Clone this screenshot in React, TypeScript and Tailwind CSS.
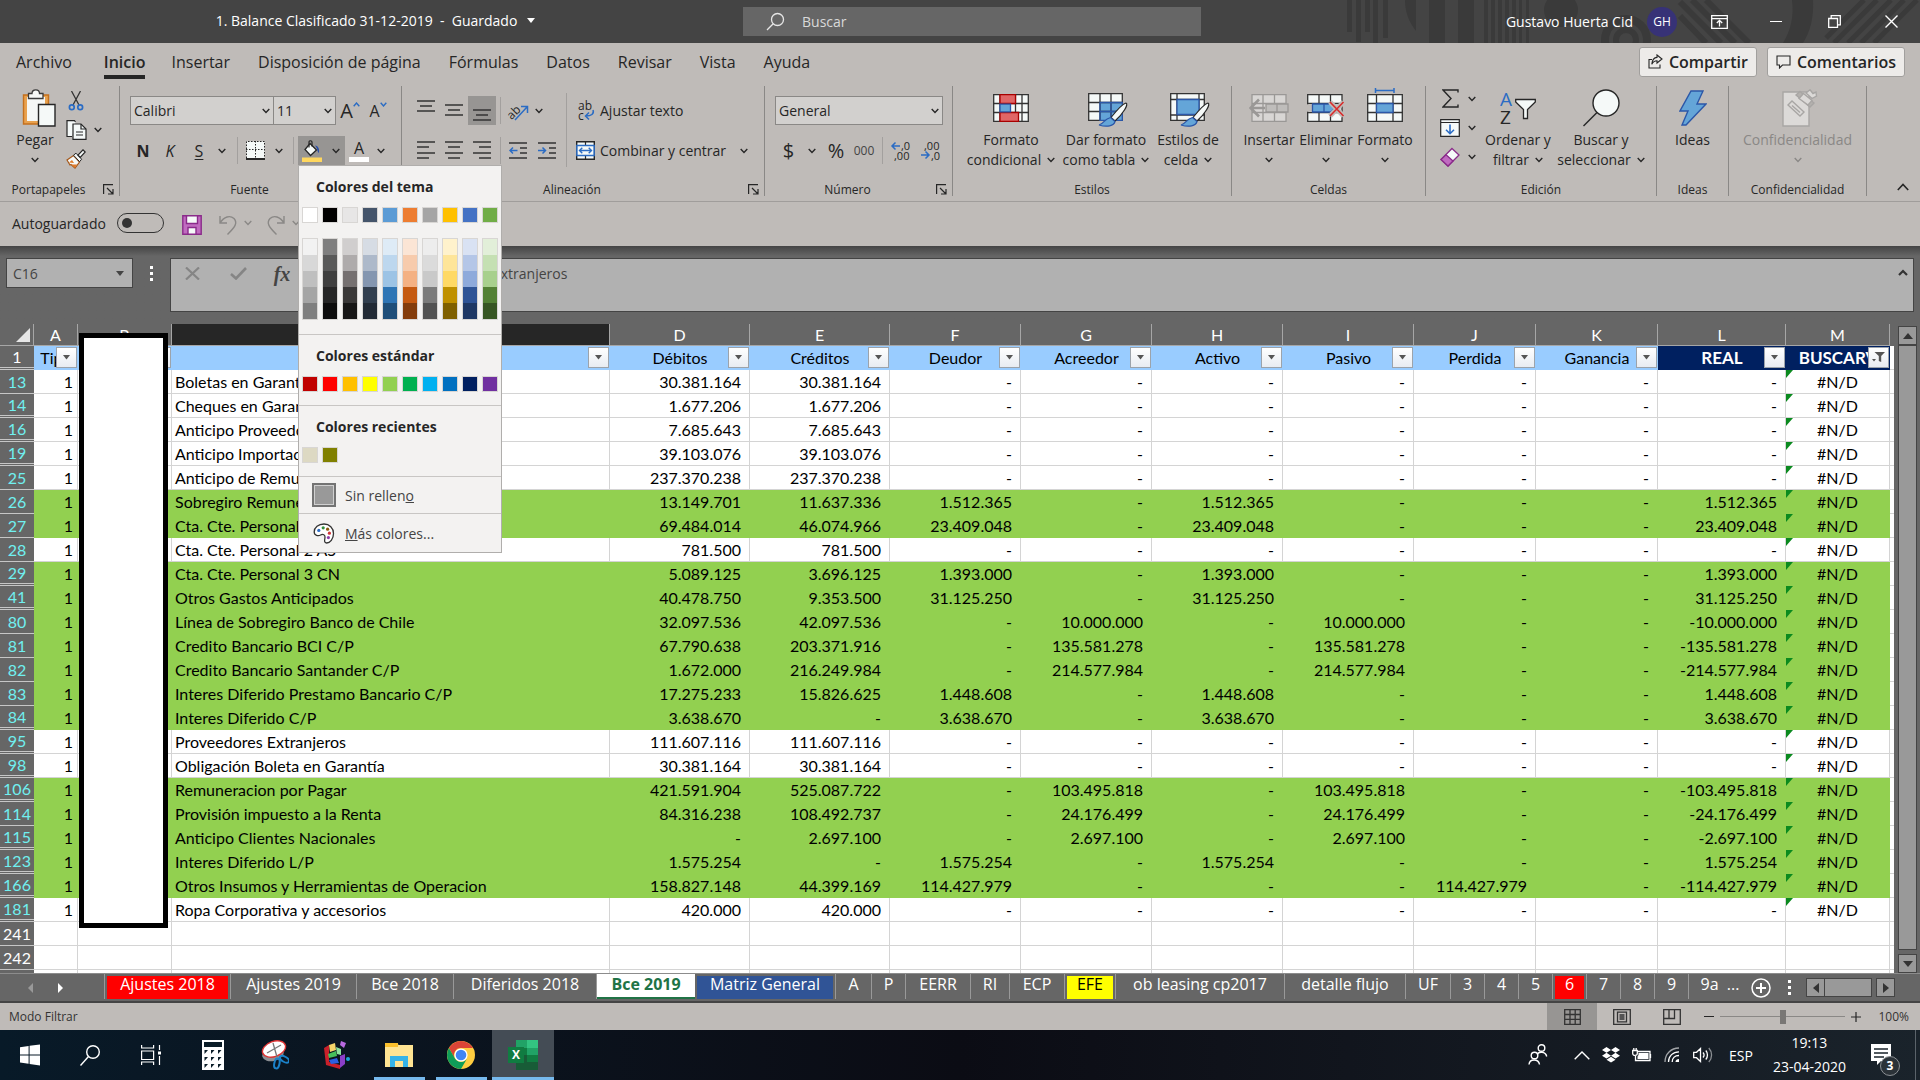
import React, { useState } from 'react';

type Children = { children?: React.ReactNode };

type Row = { n: number; name: string; green?: boolean; cells: string[] };

const dash = '-';

// Débitos, Créditos, Deudor, Acreedor, Activo, Pasivo, Perdida, Ganancia, REAL
const rows: Row[] = [
  { n: 13, name: 'Boletas en Garantía', cells: ['30.381.164', '30.381.164', dash, dash, dash, dash, dash, dash, dash] },
  { n: 14, name: 'Cheques en Garantía', cells: ['1.677.206', '1.677.206', dash, dash, dash, dash, dash, dash, dash] },
  { n: 16, name: 'Anticipo Proveedores Extranjeros', cells: ['7.685.643', '7.685.643', dash, dash, dash, dash, dash, dash, dash] },
  { n: 19, name: 'Anticipo Importaciones', cells: ['39.103.076', '39.103.076', dash, dash, dash, dash, dash, dash, dash] },
  { n: 25, name: 'Anticipo de Remuneraciones', cells: ['237.370.238', '237.370.238', dash, dash, dash, dash, dash, dash, dash] },
  { n: 26, name: 'Sobregiro Remuneraciones', green: true, cells: ['13.149.701', '11.637.336', '1.512.365', dash, '1.512.365', dash, dash, dash, '1.512.365'] },
  { n: 27, name: 'Cta. Cte. Personal', green: true, cells: ['69.484.014', '46.074.966', '23.409.048', dash, '23.409.048', dash, dash, dash, '23.409.048'] },
  { n: 28, name: 'Cta. Cte. Personal 2 AS', cells: ['781.500', '781.500', dash, dash, dash, dash, dash, dash, dash] },
  { n: 29, name: 'Cta. Cte. Personal 3 CN', green: true, cells: ['5.089.125', '3.696.125', '1.393.000', dash, '1.393.000', dash, dash, dash, '1.393.000'] },
  { n: 41, name: 'Otros Gastos Anticipados', green: true, cells: ['40.478.750', '9.353.500', '31.125.250', dash, '31.125.250', dash, dash, dash, '31.125.250'] },
  { n: 80, name: 'Línea de Sobregiro Banco de Chile', green: true, cells: ['32.097.536', '42.097.536', dash, '10.000.000', dash, '10.000.000', dash, dash, '-10.000.000'] },
  { n: 81, name: 'Credito Bancario BCI C/P', green: true, cells: ['67.790.638', '203.371.916', dash, '135.581.278', dash, '135.581.278', dash, dash, '-135.581.278'] },
  { n: 82, name: 'Credito Bancario Santander C/P', green: true, cells: ['1.672.000', '216.249.984', dash, '214.577.984', dash, '214.577.984', dash, dash, '-214.577.984'] },
  { n: 83, name: 'Interes Diferido Prestamo Bancario C/P', green: true, cells: ['17.275.233', '15.826.625', '1.448.608', dash, '1.448.608', dash, dash, dash, '1.448.608'] },
  { n: 84, name: 'Interes Diferido C/P', green: true, cells: ['3.638.670', dash, '3.638.670', dash, '3.638.670', dash, dash, dash, '3.638.670'] },
  { n: 95, name: 'Proveedores Extranjeros', cells: ['111.607.116', '111.607.116', dash, dash, dash, dash, dash, dash, dash] },
  { n: 98, name: 'Obligación Boleta en Garantía', cells: ['30.381.164', '30.381.164', dash, dash, dash, dash, dash, dash, dash] },
  { n: 106, name: 'Remuneracion por Pagar', green: true, cells: ['421.591.904', '525.087.722', dash, '103.495.818', dash, '103.495.818', dash, dash, '-103.495.818'] },
  { n: 114, name: 'Provisión impuesto a la Renta', green: true, cells: ['84.316.238', '108.492.737', dash, '24.176.499', dash, '24.176.499', dash, dash, '-24.176.499'] },
  { n: 115, name: 'Anticipo Clientes Nacionales', green: true, cells: [dash, '2.697.100', dash, '2.697.100', dash, '2.697.100', dash, dash, '-2.697.100'] },
  { n: 123, name: 'Interes Diferido L/P', green: true, cells: ['1.575.254', dash, '1.575.254', dash, '1.575.254', dash, dash, dash, '1.575.254'] },
  { n: 166, name: 'Otros Insumos y Herramientas de Operacion', green: true, cells: ['158.827.148', '44.399.169', '114.427.979', dash, dash, dash, '114.427.979', dash, '-114.427.979'] },
  { n: 181, name: 'Ropa Corporativa y accesorios', cells: ['420.000', '420.000', dash, dash, dash, dash, dash, dash, dash] },
];

const columns = [
  { letter: 'A', title: 'Tipo', width: 'w-[44px]' },
  { letter: 'B', title: '', width: 'w-[94px]' },
  { letter: 'C', title: '', width: '' },
  { letter: 'D', title: 'Débitos', width: 'w-[140px]' },
  { letter: 'E', title: 'Créditos', width: 'w-[140px]' },
  { letter: 'F', title: 'Deudor', width: 'w-[131px]' },
  { letter: 'G', title: 'Acreedor', width: 'w-[131px]' },
  { letter: 'H', title: 'Activo', width: 'w-[131px]' },
  { letter: 'I', title: 'Pasivo', width: 'w-[131px]' },
  { letter: 'J', title: 'Perdida', width: 'w-[122px]' },
  { letter: 'K', title: 'Ganancia', width: 'w-[122px]' },
  { letter: 'L', title: 'REAL', width: 'w-[128px]', navy: true },
  { letter: 'M', title: 'BUSCARV', width: 'w-[104px]', navy: true },
];

const themeColors = [
  ['#ffffff', '#f2f2f2', '#d8d8d8', '#bfbfbf', '#a5a5a5', '#7f7f7f'],
  ['#000000', '#7f7f7f', '#595959', '#3f3f3f', '#262626', '#0c0c0c'],
  ['#e7e6e6', '#d0cece', '#aeabab', '#757070', '#3a3838', '#171616'],
  ['#44546a', '#d6dce4', '#adb9ca', '#8496b0', '#323f4f', '#222a35'],
  ['#5b9bd5', '#deebf6', '#bdd7ee', '#9cc3e5', '#2e75b5', '#1e4e79'],
  ['#ed7d31', '#fbe5d5', '#f7cbac', '#f4b183', '#c55a11', '#833c0b'],
  ['#a5a5a5', '#ededed', '#dbdbdb', '#c9c9c9', '#7b7b7b', '#525252'],
  ['#ffc000', '#fff2cc', '#fee599', '#ffd965', '#bf9000', '#7f6000'],
  ['#4472c4', '#d9e2f3', '#b4c6e7', '#8eaadb', '#2f5496', '#1f3864'],
  ['#70ad47', '#e2efd9', '#c5e0b3', '#a8d08d', '#538135', '#375623'],
];

const standardColors = ['#c00000', '#ff0000', '#ffc000', '#ffff00', '#92d050', '#00b050', '#00b0f0', '#0070c0', '#002060', '#7030a0'];
const recentColors = ['#ddd9c3', '#808000'];

const sheets = [
  { name: 'Ajustes 2018', width: 'w-[126px]', fill: 'bg-[#ff0000] text-white' },
  { name: 'Ajustes 2019', width: 'w-[126px]' },
  { name: 'Bce 2018', width: 'w-[97px]' },
  { name: 'Diferidos 2018', width: 'w-[143px]' },
  { name: 'Bce 2019', width: 'w-[98px]', active: true },
  { name: 'Matriz General', width: 'w-[141px]', fill: 'bg-[#305496] text-white' },
  { name: 'A', width: 'w-[36px]' },
  { name: 'P', width: 'w-[34px]' },
  { name: 'EERR', width: 'w-[65px]' },
  { name: 'RI', width: 'w-[39px]' },
  { name: 'ECP', width: 'w-[55px]' },
  { name: 'EFE', width: 'w-[51px]', fill: 'bg-[#ffff00] text-black' },
  { name: 'ob leasing cp2017', width: 'w-[169px]' },
  { name: 'detalle flujo', width: 'w-[121px]' },
  { name: 'UF', width: 'w-[45px]' },
  { name: '3', width: 'w-[34px]' },
  { name: '4', width: 'w-[34px]' },
  { name: '5', width: 'w-[34px]' },
  { name: '6', width: 'w-[34px]', fill: 'bg-[#ff0000] text-white' },
  { name: '7', width: 'w-[34px]' },
  { name: '8', width: 'w-[34px]' },
  { name: '9', width: 'w-[34px]' },
];

/* ---------- small shared pieces ---------- */

const Chevron: React.FC<{ className?: string }> = ({ className = '' }) => (
  <svg width="8" height="6" viewBox="0 0 8 6" className={`shrink-0 ${className}`} fill="none" stroke="currentColor" strokeWidth="1.4">
    <path d="M0.7 1 L4 4.4 L7.3 1" />
  </svg>
);

const IconButton: React.FC<Children & { label: string; className?: string }> = ({ label, className = '', children }) => (
  <button aria-label={label} title={label} className={`flex h-[29px] shrink-0 items-center justify-center ${className}`}>
    {children}
  </button>
);

const Separator: React.FC<{ className?: string }> = ({ className = '' }) => (
  <div className={`h-[27px] w-px shrink-0 bg-[#a3a09e] ${className}`} />
);

const Group: React.FC<Children & { label: string; className: string; launcher?: boolean }> = ({ label, className, launcher, children }) => (
  <section aria-label={label} className={`flex shrink-0 flex-col border-r border-[#8a8886] ${className}`}>
    <div className="flex h-[97px]">{children}</div>
    <div className="flex h-[13px] items-center">
      <span className="flex-1 text-center text-[12px] leading-[13px]">{label}</span>
      {launcher && (
        <button aria-label={`Opciones de ${label}`} className="flex w-[22px] justify-center">
          <svg width="11" height="11" viewBox="0 0 11 11" fill="none" stroke="#262626" strokeWidth="1.2">
            <path d="M0.6 10 V0.6 H10 M4 4 L9.5 9.5 M10 5 V10 H5" />
          </svg>
        </button>
      )}
    </div>
  </section>
);

const BigButton: React.FC<{ icon: React.ReactNode; lines: string[]; className: string; chevron?: 'inline' | 'below' }> = ({ icon, lines, className, chevron }) => (
  <button className={`flex shrink-0 flex-col items-center text-[14px] leading-5 ${className}`}>
    <span className="flex h-[44px] items-center justify-center">{icon}</span>
    <span className="whitespace-nowrap">{lines[0]}</span>
    {chevron === 'inline' && (
      <span className="flex items-center gap-[6px] whitespace-nowrap">
        {lines[1]}
        <Chevron />
      </span>
    )}
    {chevron === 'below' && <Chevron className="mt-[7px]" />}
  </button>
);

/* ---------- title bar ---------- */

const TitlePattern: React.FC = () => (
  <svg className="absolute right-0 top-0" width="580" height="43" viewBox="0 0 580 43" fill="#3a3a3a" aria-hidden="true">
    <path d="M7 0h5v32h-5z M16 0h5v42h-5z M25 0h5v32h-5z M33 0h5v43h-5z M43 0h5v38h-5z" />
    <path d="M65 0 H76 V31 C69 22 65 12 65 0Z M89 0h16v43h-16z M118 0h16v43h-16z" />
    <path d="M144 0h4v43h-4z M151 0h4v43h-4z M158 0h4v43h-4z M165 0h4v43h-4z M172 0h4v43h-4z M179 0h3v43h-3z M186 0h3v43h-3z" />
    <circle cx="221" cy="10" r="17" />
    <g fill="none" stroke="#3a3a3a">
      <circle cx="286" cy="40" r="21" strokeWidth="8" />
      <circle cx="286" cy="40" r="10" strokeWidth="6" />
      <path strokeWidth="6" d="M340 16 L366 43 M340 2 L381 43 M352 0 L395 43 M366 0 L409 43" />
      <path strokeWidth="5" d="M486 38 L524 0 M494 43 L537 0 M508 43 L551 0 M521 43 L564 0 M534 43 L577 0" />
    </g>
    <path d="M452 0 H473 C474 18 470 32 463 43 H443 C451 30 454 16 452 0Z" />
  </svg>
);

const TitleBar: React.FC = () => (
  <header className="relative grid h-[43px] shrink-0 grid-cols-[743fr_458fr_719fr] items-center bg-[#444444] text-[14px] text-white">
    <TitlePattern />
    <div className="flex items-center justify-center gap-[10px] pb-[2px] pl-2">
      <h1 className="whitespace-pre">1. Balance Clasificado 31-12-2019  -  Guardado</h1>
      <svg width="8" height="5" viewBox="0 0 8 5" fill="white"><path d="M0 0H8L4 5Z" /></svg>
    </div>
    <label className="flex h-[29px] items-center bg-[#666666] pl-[23px]">
      <svg width="19" height="19" viewBox="0 0 19 19" fill="none" stroke="#e6e6e6" strokeWidth="1.3">
        <circle cx="11.5" cy="7.5" r="6" />
        <path d="M7.2 11.8 L1 18" />
      </svg>
      <input type="text" aria-label="Buscar" placeholder="Buscar" className="ml-[17px] flex-1 bg-transparent outline-none placeholder:text-[#d9d9d9]" />
    </label>
    <div className="relative flex items-center justify-end">
      <span className="mr-[14px]">Gustavo Huerta Cid</span>
      <span className="mr-[14px] flex size-[30px] items-center justify-center rounded-full bg-[#373277] text-[12px]">GH</span>
      <button aria-label="Opciones de presentación de la cinta" className="flex w-[56px] justify-center">
        <svg width="17" height="14" viewBox="0 0 17 14" fill="none" stroke="white" strokeWidth="1.3">
          <path d="M0.7 0.7H16.3V13.3H0.7Z M0.7 3.6H16.3 M8.5 11.5V5.5 M5.8 8 L8.5 5.4 L11.2 8" />
        </svg>
      </button>
      <button aria-label="Minimizar" className="flex w-[58px] justify-center"><span className="h-px w-3 bg-white" /></button>
      <button aria-label="Restaurar" className="flex w-[58px] justify-center">
        <svg width="13" height="13" viewBox="0 0 13 13" fill="none" stroke="white" strokeWidth="1.3">
          <path d="M0.7 3.5H9.5V12.3H0.7Z M3.2 3.2V0.7H12.3V9.8H9.8" />
        </svg>
      </button>
      <button aria-label="Cerrar" className="flex w-[57px] justify-center">
        <svg width="13" height="13" viewBox="0 0 13 13" fill="none" stroke="white" strokeWidth="1.4"><path d="M0.5 0.5 L12.5 12.5 M12.5 0.5 L0.5 12.5" /></svg>
      </button>
    </div>
  </header>
);

/* ---------- ribbon ---------- */

const tabs = ['Archivo', 'Inicio', 'Insertar', 'Disposición de página', 'Fórmulas', 'Datos', 'Revisar', 'Vista', 'Ayuda'];

const RibbonTabs: React.FC = () => (
  <nav className="flex h-[43px] items-center pb-[6px] pr-[15px]">
    {tabs.map((tab) => (
      <button key={tab} className={`px-[14px] text-[16px] leading-[22px] first:pl-4 first:pr-[18px] ${tab === 'Inicio' ? 'pr-3 font-semibold' : ''}`}>
        {tab === 'Inicio' ? <span className="block border-b-4 border-[#262626] pb-[2px] pt-[6px]">{tab}</span> : tab}
      </button>
    ))}
    <div className="ml-auto flex gap-[10px] text-[16px] font-semibold">
      <button className="flex h-[30px] items-center gap-[6px] rounded-[3px] border border-[#a19f9d] bg-[#edebe9] px-2">
        <svg width="15" height="15" viewBox="0 0 15 15" fill="none" stroke="#262626" strokeWidth="1.1">
          <path d="M4 5.5H1V14H12V10.5 M9 1 L14 5 L9 9 V6.8 C6.5 6.8 5 8 3.8 10.2 C4.2 6.2 6.2 3.6 9 3.4Z" />
        </svg>
        Compartir
      </button>
      <button className="flex h-[30px] items-center gap-[6px] rounded-[3px] border border-[#a19f9d] bg-[#edebe9] px-2">
        <svg width="15" height="14" viewBox="0 0 15 14" fill="none" stroke="#262626" strokeWidth="1.1">
          <path d="M1 1H14V10H6.5L3.5 13V10H1Z" />
        </svg>
        Comentarios
      </button>
    </div>
  </nav>
);

const AlignLines: React.FC<{ rows: [number, number, number][] }> = ({ rows: lines }) => (
  <svg width="18" height="22" viewBox="0 0 18 22" stroke="#333" strokeWidth="1.5">
    {lines.map(([y, x1, x2]) => <path key={y} d={`M${x1} ${y}H${x2}`} />)}
  </svg>
);

const Swatch: React.FC<{ color: string }> = ({ color }) => (
  <button aria-label={`Color ${color}`} className="size-4 border border-[#d8d6d4]" style={{ backgroundColor: color }} />
);

const FillMenu: React.FC = () => (
  <div role="menu" className="absolute left-0 top-full z-30 w-[204px] border border-[#b0aeac] bg-[#f3f2f1] text-[14px] text-[#444444]">
    <h2 className="px-[17px] pb-[10px] pt-[11px] font-bold leading-5 text-[#262626]">Colores del tema</h2>
    <div className="flex gap-1 px-[3px]">
      {themeColors.map((c) => <Swatch key={c[0]} color={c[0]} />)}
    </div>
    <div className="mt-[15px] flex gap-1 px-[3px] pb-[14px]">
      {themeColors.map((c) => (
        <div key={c[0]} className="flex flex-col border border-[#d8d6d4]">
          {c.slice(1).map((shade) => (
            <button key={shade} aria-label={`Color ${shade}`} className="h-4 w-[14px]" style={{ backgroundColor: shade }} />
          ))}
        </div>
      ))}
    </div>
    <h2 className="border-t border-[#c8c6c4] px-[17px] pb-[10px] pt-[11px] font-bold leading-5 text-[#262626]">Colores estándar</h2>
    <div className="flex gap-1 px-[3px] pb-[13px]">
      {standardColors.map((c) => <Swatch key={c} color={c} />)}
    </div>
    <h2 className="border-t border-[#c8c6c4] px-[17px] pb-[10px] pt-[11px] font-bold leading-5 text-[#262626]">Colores recientes</h2>
    <div className="flex gap-1 px-[3px] pb-[13px]">
      {recentColors.map((c) => <Swatch key={c} color={c} />)}
    </div>
    <button role="menuitem" className="flex h-[37px] w-full items-center gap-[9px] border-t border-[#c8c6c4] pl-[13px]">
      <span className="size-6 border-2 border-[#737373] bg-[#999999] outline outline-1 -outline-offset-3 outline-[#d0d0d0]" />
      <span>Sin rellen<u>o</u></span>
    </button>
    <button role="menuitem" className="flex h-[39px] w-full items-center gap-[10px] border-t border-[#c8c6c4] pl-[14px]">
      <svg width="22" height="21" viewBox="0 0 22 21">
        <path d="M11 1 C16.5 1 20.5 5 20.5 10.5 C20.5 16 17 20 13.6 20 C10.8 20 11.6 17 12 14.6 C12.4 12 10 10.6 7.6 12 C5.4 13.4 1.2 12.6 1.2 9 C1.2 4.6 5.4 1 11 1Z" fill="white" stroke="#333" strokeWidth="1.3" />
        <circle cx="5.8" cy="7.4" r="1.6" fill="#2b6cc4" />
        <circle cx="10.2" cy="4.8" r="1.6" fill="#2f8f3c" />
        <circle cx="14.6" cy="6.2" r="1.6" fill="#8a5a10" />
        <circle cx="16.4" cy="10.2" r="1.6" fill="#d13438" />
        <circle cx="15.4" cy="14.6" r="1.6" fill="#8e3ba8" />
      </svg>
      <span><u>M</u>ás colores...</span>
    </button>
  </div>
);

const ClipboardGroup: React.FC = () => (
  <Group label="Portapapeles" className="w-[120px]" launcher>
    <button className="flex w-[62px] flex-col items-center pl-2 text-[14px] leading-5">
      <span className="flex h-[44px] items-center pl-2">
        <svg width="34" height="38" viewBox="0 0 34 38">
          <path d="M1.5 6H26.5V35H1.5Z" fill="#e8a14e" stroke="#c5701c" strokeWidth="1.4" />
          <path d="M5 8H23V32H5Z" fill="#f5f7f6" />
          <path d="M6.5 9.5V4.5H10C10 -0.3 17.5 -0.3 17.5 4.5H21V9.5Z" fill="#f5f7f6" stroke="#3b3b3b" strokeWidth="1.3" />
          <path d="M16.5 15.5H33V37H16.5Z" fill="#f5f9f8" stroke="#262626" strokeWidth="1.4" />
        </svg>
      </span>
      Pegar
      <Chevron className="mt-[7px]" />
    </button>
    <div className="flex flex-col text-[#262626]">
      <IconButton label="Cortar" className="w-7">
        <svg width="16" height="20" viewBox="0 0 16 20" fill="none" strokeWidth="1.3">
          <path d="M3.5 0 L11 14 M12.5 0 L5 14" stroke="#333" />
          <circle cx="3.8" cy="16.2" r="2.4" stroke="#2b6cc4" strokeWidth="1.7" />
          <circle cx="12.2" cy="16.2" r="2.4" stroke="#2b6cc4" strokeWidth="1.7" />
        </svg>
      </IconButton>
      <div className="flex">
        <IconButton label="Copiar" className="w-7">
          <svg width="21" height="20" viewBox="0 0 21 20" fill="#f5f9f8" stroke="#262626" strokeWidth="1.2">
            <path d="M6 16.5H1V0.7H8.5L9.5 2" />
            <path d="M7 4H15L20 9V19.3H7Z" />
            <path d="M15 4V9H20 M10 12H17 M10 15H17" fill="none" />
          </svg>
        </IconButton>
        <button aria-label="Más opciones de copiar" className="w-4 pl-1"><Chevron /></button>
      </div>
      <IconButton label="Copiar formato" className="w-7">
        <svg width="20" height="20" viewBox="0 0 20 20">
          <path d="M1 11 L7.5 6.5 L13.5 13 L9 19 L5 15.5 L4 16Z" fill="#f5f9f8" stroke="#a5581b" strokeWidth="1.2" />
          <path d="M5 15.5 L11 15.5 L9 19Z M3 13.5 L6 11 L8 14Z" fill="#e07b2a" />
          <path d="M7.5 6.2 L10 4.2 L15.6 10.2 L13.6 12.7Z" fill="#f5f9f8" stroke="#262626" strokeWidth="1" />
          <path d="M12 6.2 L17 0.8 L19.2 3 L14.2 8.3Z" fill="#f5f9f8" stroke="#262626" strokeWidth="1.2" />
        </svg>
      </IconButton>
    </div>
  </Group>
);

const FontGroup: React.FC = () => (
  <Group label="Fuente" className="w-[282px]" launcher>
    <div className="flex flex-col gap-[11px] pl-[10px] pt-[10px]">
      <div className="flex">
        <label className="relative">
          <select aria-label="Fuente" className="block h-[29px] w-[144px] appearance-none border border-[#8a8886] bg-[#d2d0ce] px-[3px] text-[14px]">
            <option>Calibri</option>
          </select>
          <Chevron className="pointer-events-none absolute right-1 top-3" />
        </label>
        <label className="relative">
          <select aria-label="Tamaño de fuente" className="block h-[29px] w-[62px] appearance-none border border-l-0 border-[#8a8886] bg-[#d2d0ce] px-[3px] text-[14px]">
            <option>11</option>
          </select>
          <Chevron className="pointer-events-none absolute right-1 top-3" />
        </label>
        <IconButton label="Aumentar tamaño de fuente" className="w-7 text-[20px]">
          A<svg width="7" height="5" viewBox="0 0 7 5" className="mb-3" fill="none" stroke="#2b6cc4" strokeWidth="1.4"><path d="M0.7 4.2 L3.5 1 L6.3 4.2" /></svg>
        </IconButton>
        <IconButton label="Disminuir tamaño de fuente" className="w-7 text-[16px]">
          A<svg width="7" height="5" viewBox="0 0 7 5" className="mb-3" fill="none" stroke="#2b6cc4" strokeWidth="1.4"><path d="M0.7 0.8 L3.5 4 L6.3 0.8" /></svg>
        </IconButton>
      </div>
      <div className="flex items-center text-[16px]">
        <IconButton label="Negrita" className="w-[26px] font-bold">N</IconButton>
        <IconButton label="Cursiva" className="w-[28px] italic">K</IconButton>
        <IconButton label="Subrayado" className="w-[30px] underline underline-offset-2">S</IconButton>
        <IconButton label="Opciones de subrayado" className="w-4"><Chevron /></IconButton>
        <Separator className="ml-[7px]" />
        <IconButton label="Bordes" className="w-[34px]">
          <svg width="19" height="19" viewBox="0 0 19 19" fill="none" stroke="#262626">
            <path d="M0.5 0.5H18.5V17H0.5Z" fill="#f5f9f8" stroke="none" />
            <path d="M0.5 17V0.5H18.5V17 M9.5 0V17 M0 8.5H19" strokeDasharray="1.5 1.5" />
            <path d="M0 18H19" strokeWidth="2" />
          </svg>
        </IconButton>
        <IconButton label="Opciones de bordes" className="w-[14px]"><Chevron /></IconButton>
        <Separator className="ml-[7px] mr-1" />
        <div className="relative flex bg-[#979593]">
          <IconButton label="Color de relleno" className="w-7">
            <svg width="20" height="22" viewBox="0 0 20 22">
              <path d="M8 3.5 L14.5 10 L8.5 15.5 L3 9.5Z" fill="#f5f9f8" stroke="#262626" strokeWidth="1.3" />
              <path d="M7 7.5 V2 C7 0.3 10 0.3 10 2 V6.5" fill="none" stroke="#262626" strokeWidth="1.2" />
              <path d="M13 5.5 C16.5 6 17.5 9 17 13 C15 12 15.8 8.5 13 5.5Z" fill="#2b4fa8" />
              <path d="M0 17.5H20V22H0Z" fill="#ffd75e" />
            </svg>
          </IconButton>
          <IconButton label="Opciones de color de relleno" className="w-[19px]"><Chevron /></IconButton>
          <FillMenu />
        </div>
        <IconButton label="Color de fuente" className="w-7 flex-col">
          <span className="leading-[18px]">A</span>
          <span className="h-[5px] w-5 bg-white" />
        </IconButton>
        <IconButton label="Opciones de color de fuente" className="w-4"><Chevron /></IconButton>
      </div>
    </div>
  </Group>
);

const AlignmentGroup: React.FC = () => (
  <Group label="Alineación" className="w-[363px]" launcher>
    <div className="flex w-[164px] shrink-0 flex-col gap-[11px] pl-[10px] pt-[10px]">
      <div className="flex items-center">
        <IconButton label="Alinear en la parte superior" className="w-7"><AlignLines rows={[[1, 0, 18], [6, 3, 15], [11, 0, 18]]} /></IconButton>
        <IconButton label="Alinear en el medio" className="w-7"><AlignLines rows={[[5, 0, 18], [10, 3, 15], [15, 0, 18]]} /></IconButton>
        <IconButton label="Alinear en la parte inferior" className="w-7 bg-[#979593]"><AlignLines rows={[[10, 0, 18], [15, 3, 15], [20, 0, 18]]} /></IconButton>
        <Separator className="ml-1" />
        <IconButton label="Orientación" className="w-[34px]">
          <svg width="24" height="24" viewBox="0 0 24 24" className="overflow-visible">
            <text x="7" y="16" textAnchor="middle" transform="rotate(-45 9 12)" fontSize="12" fill="#262626">ab</text>
            <path d="M9 21 L21 8 M15 7.5 H21.5 V14" fill="none" stroke="#2b6cc4" strokeWidth="1.5" />
          </svg>
        </IconButton>
        <IconButton label="Opciones de orientación" className="w-2"><Chevron /></IconButton>
      </div>
      <div className="flex items-center">
        <IconButton label="Alinear a la izquierda" className="w-7"><AlignLines rows={[[2, 0, 18], [7, 0, 12], [13, 0, 18], [18, 0, 12]]} /></IconButton>
        <IconButton label="Centrar" className="w-7"><AlignLines rows={[[2, 0, 18], [7, 3, 15], [13, 0, 18], [18, 3, 15]]} /></IconButton>
        <IconButton label="Alinear a la derecha" className="w-7"><AlignLines rows={[[2, 0, 18], [7, 6, 18], [13, 0, 18], [18, 6, 18]]} /></IconButton>
        <Separator className="ml-1" />
        <IconButton label="Disminuir sangría" className="w-[34px]">
          <svg width="18" height="18" viewBox="0 0 18 18" fill="none" strokeWidth="1.5">
            <path d="M0 1H18 M11 6H18 M11 11H18 M0 16H18" stroke="#333" />
            <path d="M8.5 8.5H1 M4 5.5 L1 8.5 L4 11.5" stroke="#2b6cc4" />
          </svg>
        </IconButton>
        <IconButton label="Aumentar sangría" className="w-6">
          <svg width="18" height="18" viewBox="0 0 18 18" fill="none" strokeWidth="1.5">
            <path d="M0 1H18 M11 6H18 M11 11H18 M0 16H18" stroke="#333" />
            <path d="M0 8.5H7.5 M4.5 5.5 L7.5 8.5 L4.5 11.5" stroke="#2b6cc4" />
          </svg>
        </IconButton>
      </div>
    </div>
    <div className="mt-[7px] h-[74px] w-px bg-[#a3a09e]" />
    <div className="flex flex-col gap-[11px] pl-[9px] pt-[10px] text-[14px]">
      <button className="flex h-[29px] items-center gap-[5px]">
        <svg width="19" height="28" viewBox="0 0 19 28">
          <text x="2" y="13" fontSize="12" fill="#262626">ab</text>
          <text x="2" y="23" fontSize="12" fill="#262626">c</text>
          <path d="M17 13 C18.5 17 15 19 10 19 M13 15.5 L9.5 19 L13 22.5" fill="none" stroke="#2b6cc4" strokeWidth="1.5" />
        </svg>
        Ajustar texto
      </button>
      <div className="flex items-center">
        <button className="flex h-[29px] items-center gap-[5px]">
          <svg width="19" height="19" viewBox="0 0 19 19" fill="none">
            <path d="M0.7 0.7H18.3V18.3H0.7Z" fill="#f5f9f8" stroke="#262626" strokeWidth="1.4" />
            <path d="M9.5 0.7V4.5 M9.5 14.5V18.3" stroke="#262626" strokeWidth="1.2" />
            <path d="M0.9 4.5H18.1V14.5H0.9Z" fill="#f5f9f8" stroke="#2b6cc4" strokeWidth="1.5" />
            <path d="M3.5 9.5H15.5 M6.3 6.8 L3.5 9.5 L6.3 12.2 M12.7 6.8 L15.5 9.5 L12.7 12.2" stroke="#2b6cc4" strokeWidth="1.4" />
          </svg>
          Combinar y centrar
        </button>
        <IconButton label="Opciones de combinar" className="ml-3 w-3"><Chevron /></IconButton>
      </div>
    </div>
  </Group>
);

const NumberGroup: React.FC = () => (
  <Group label="Número" className="w-[188px]" launcher>
    <div className="flex flex-col gap-[11px] pl-[10px] pt-[10px]">
      <label className="relative">
        <select aria-label="Formato de número" className="block h-[29px] w-[168px] appearance-none border border-[#8a8886] bg-[#d2d0ce] px-[3px] text-[14px]">
          <option>General</option>
        </select>
        <Chevron className="pointer-events-none absolute right-1 top-3" />
      </label>
      <div className="flex items-center">
        <IconButton label="Formato de moneda" className="w-[27px] text-[20px]">$</IconButton>
        <IconButton label="Opciones de moneda" className="w-5"><Chevron /></IconButton>
        <IconButton label="Porcentaje" className="w-[28px] text-[20px]">%</IconButton>
        <IconButton label="Millares" className="w-[28px] text-[12px] text-[#444444]">000</IconButton>
        <Separator className="ml-1" />
        <IconButton label="Aumentar decimales" className="w-[36px]">
          <svg width="22" height="28" viewBox="0 0 22 28" fontSize="11" fill="#262626">
            <text x="11" y="13">,0</text>
            <text x="4" y="23">,00</text>
            <path d="M10 9H2 M5.5 5.5 L2 9 L5.5 12.5" fill="none" stroke="#2b6cc4" strokeWidth="1.5" />
          </svg>
        </IconButton>
        <IconButton label="Disminuir decimales" className="w-6">
          <svg width="22" height="28" viewBox="0 0 22 28" fontSize="11" fill="#262626">
            <text x="4" y="13">,00</text>
            <text x="11" y="23">,0</text>
            <path d="M1 18H9 M5.5 14.5 L9 18 L5.5 21.5" fill="none" stroke="#2b6cc4" strokeWidth="1.5" />
          </svg>
        </IconButton>
      </div>
    </div>
  </Group>
);

const Brush: React.FC = () => (
  <>
    <path d="M39 11 C42 12 36 22 28 29 L24 25.5 C30 18 35 12 39 11Z" fill="#f5f9f8" stroke="#262626" strokeWidth="1.2" />
    <path d="M23.5 25.5 L28 29.5 C27 34 20 35.5 12 33 C17 32 17 27 23.5 25.5Z" fill="#64a5d8" stroke="#2b57a8" strokeWidth="1.2" />
  </>
);

const StylesGroup: React.FC = () => (
  <Group label="Estilos" className="w-[279px]">
    <div className="flex pl-[10px]">
      <BigButton
        className="w-[96px]"
        lines={['Formato', 'condicional']}
        chevron="inline"
        icon={
          <svg width="36" height="28" viewBox="0 0 36 28" stroke="#333" strokeWidth="1.3">
            <path d="M0.7 0.7H35.3V27.3H0.7Z" fill="#f5f9f8" />
            <path d="M0 9.5H36 M0 18.5H36 M7 0V28 M22.5 0V28 M29 0V28" />
            <path d="M7 0.7H22.5V9.5H7Z M7 18.5H25.5V27.3H7Z" fill="#e06666" stroke="#a80000" />
            <path d="M7 10.2H17.5V17.8H7Z" fill="#64a5d8" stroke="#2b57a8" />
          </svg>
        }
      />
      <BigButton
        className="w-[94px]"
        lines={['Dar formato', 'como tabla']}
        chevron="inline"
        icon={
          <svg width="42" height="36" viewBox="0 0 42 36" className="ml-1 mt-1">
            <path d="M1.7 1.7H35.3V28.3H1.7Z" fill="#f5f9f8" stroke="#333" strokeWidth="1.3" />
            <path d="M13 10.5H35.3V28.3H13Z" fill="#64a5d8" />
            <path d="M1 10.5H36 M1 19.5H36 M13 1V29 M24 1V29" stroke="#333" strokeWidth="1.3" />
            <path d="M13 28.3V10.5H35.3V28.3Z M13 19.5H35 M24 10.5V28" fill="none" stroke="#2b57a8" strokeWidth="1.3" />
            <Brush />
          </svg>
        }
      />
      <BigButton
        className="w-[70px]"
        lines={['Estilos de', 'celda']}
        chevron="inline"
        icon={
          <svg width="42" height="36" viewBox="0 0 42 36" className="ml-1 mt-1">
            <path d="M1.7 1.7H35.3V28.3H1.7Z" fill="#f5f9f8" stroke="#333" strokeWidth="1.3" />
            <path d="M1 7.5H36 M1 23H36 M8 1V29 M30 1V29" stroke="#333" strokeWidth="1.3" />
            <path d="M8 7.5H30V22.5H8Z" fill="#64a5d8" stroke="#2b57a8" strokeWidth="1.3" />
            <Brush />
          </svg>
        }
      />
    </div>
  </Group>
);

const CellsGroup: React.FC = () => (
  <Group label="Celdas" className="w-[194px]">
    <div className="flex pl-2">
      <BigButton
        className="w-[58px]"
        lines={['Insertar']}
        chevron="below"
        icon={
          <svg width="40" height="28" viewBox="0 0 40 28" fill="#d8d6d4" stroke="#9a9896" strokeWidth="1.3">
            <path d="M3 0.7H37V27.3H3Z M3 9.5H37 M3 18.5H37 M14 0.7V27.3 M25.5 0.7V27.3" />
            <path d="M17 10H39V18H17Z M28 10V18" fill="#bfbdbb" />
            <path d="M16 14H1.5 M10 5.5 L1.5 14 L10 22.5" fill="none" strokeWidth="2.6" />
          </svg>
        }
      />
      <BigButton
        className="w-[56px]"
        lines={['Eliminar']}
        chevron="below"
        icon={
          <svg width="38" height="28" viewBox="0 0 38 28" stroke="#333" strokeWidth="1.3">
            <path d="M0.7 0.7H35V27.3H0.7Z" fill="#f5f9f8" />
            <path d="M0 9.5H36 M0 18.5H36 M12 0V28 M23.5 0V28" />
            <path d="M-1 10.3H5V17.7H-1Z" fill="#bfbbb8" stroke="none" />
            <path d="M5.5 10H24L28 14L24 18H5.5Z M17 10V18" fill="#64a5d8" stroke="#2b57a8" />
            <path d="M23 8 L36.5 22 M36.5 8 L23 22" stroke="#bfbbb8" strokeWidth="5" />
            <path d="M23 8 L36.5 22 M36.5 8 L23 22" stroke="#d92b2b" strokeWidth="1.6" />
          </svg>
        }
      />
      <BigButton
        className="w-[62px]"
        lines={['Formato']}
        chevron="below"
        icon={
          <svg width="36" height="40" viewBox="0 0 36 40" stroke="#333" strokeWidth="1.3">
            <path d="M8.5 2.5H27 M8.5 0V5 M27 0V5" stroke="#2b6cc4" strokeWidth="1.5" />
            <path d="M0.7 6.7H35.3V33.3H0.7Z" fill="#f5f9f8" />
            <path d="M0 15.5H36 M0 24.5H36 M9.5 6V34 M26 6V34" />
            <path d="M9.5 15.5H26V24.5H9.5Z" fill="#64a5d8" stroke="#2b57a8" />
          </svg>
        }
      />
    </div>
  </Group>
);

const EditingGroup: React.FC = () => (
  <Group label="Edición" className="w-[231px]">
    <div className="-mt-[2px] flex w-[54px] flex-col pl-3">
      <div className="flex items-center gap-[6px]">
        <IconButton label="Autosuma" className="w-6">
          <svg width="17" height="19" viewBox="0 0 17 19" fill="none" stroke="#262626" strokeWidth="1.4"><path d="M16 3.5V1H1L9 9.5L1 18H16V15.5" /></svg>
        </IconButton>
        <Chevron />
      </div>
      <div className="flex items-center gap-[6px]">
        <IconButton label="Rellenar" className="w-6">
          <svg width="20" height="18" viewBox="0 0 20 18" fill="#f5f9f8" stroke="#262626" strokeWidth="1.2">
            <path d="M0.7 0.7H19.3V17.3H0.7Z M0.7 3.5H19.3" />
            <path d="M10 5.5V14.5 M6 10.8 L10 14.7 L14 10.8" fill="none" stroke="#2b6cc4" strokeWidth="1.6" />
          </svg>
        </IconButton>
        <Chevron />
      </div>
      <div className="flex items-center gap-[6px]">
        <IconButton label="Borrar" className="w-6">
          <svg width="20" height="20" viewBox="0 0 20 20" stroke="#8a2b8a" strokeWidth="1.3">
            <path d="M12 1.5 L19 8 L8 19 L1 12.5Z" fill="#f5f9f8" />
            <path d="M6 7.8 L13 14 L8 19 L1 12.5Z" fill="#c06bc0" />
          </svg>
        </IconButton>
        <Chevron />
      </div>
    </div>
    <BigButton
      className="w-[76px]"
      lines={['Ordenar y', 'filtrar']}
      chevron="inline"
      icon={
        <svg width="36" height="44" viewBox="0 0 36 44" fontSize="19" fill="#262626">
          <text x="0" y="20" className="fill-[#2b6cc4]">A</text>
          <text x="0" y="38">Z</text>
          <path d="M15.7 13.5H35.3V16L27.500 23.5V32.5H23.5V23.5L15.7 16Z" fill="#f5f9f8" stroke="#262626" strokeWidth="1.3" />
        </svg>
      }
    />
    <BigButton
      className="w-[90px]"
      lines={['Buscar y', 'seleccionar']}
      chevron="inline"
      icon={
        <svg width="38" height="38" viewBox="0 0 38 38" stroke="#262626" strokeWidth="1.4">
          <circle cx="24" cy="14" r="13" fill="#f5f9f8" />
          <path d="M15 23.5 L1.5 37" />
        </svg>
      }
    />
  </Group>
);

const Ribbon: React.FC = () => (
  <div className="shrink-0 bg-[#bfbbb8] text-[#262626]">
    <RibbonTabs />
    <div className="flex h-[116px] border-b border-[#a09d9b] pb-[5px]">
      <ClipboardGroup />
      <FontGroup />
      <AlignmentGroup />
      <NumberGroup />
      <StylesGroup />
      <CellsGroup />
      <EditingGroup />
      <Group label="Ideas" className="w-[72px]">
        <BigButton
          className="w-[71px]"
          lines={['Ideas']}
          icon={
            <svg width="28" height="36" viewBox="0 0 28 36">
              <path d="M12 1H24L18 14H27L7 35H3L9 21H1Z" fill="#64a5d8" stroke="#2b57a8" strokeWidth="1.4" />
            </svg>
          }
        />
      </Group>
      <Group label="Confidencialidad" className="w-[138px]">
        <BigButton
          className="w-[137px] text-[#8a8886]"
          lines={['Confidencialidad']}
          chevron="below"
          icon={
            <svg width="36" height="38" viewBox="0 0 36 38" fill="#dcdad8" stroke="#a8a6a4" strokeWidth="1.4" className="ml-1">
              <path d="M1 3H27V37H1Z" />
              <path d="M6 16 L10 12 L22 23 L18 27Z M10 16.5 L18 23.5" />
              <path d="M14 6 L18 2.5 L32 14 L28 18Z" fill="#b4b1ae" />
              <path d="M17 9.500 L21.500 4.500 L30 11.500 L26 16Z" />
              <path d="M24 4 L28 0.8 L31 4.500 L34 3 L34.500 7 L30 9.500Z" />
            </svg>
          }
        />
      </Group>
      <button aria-label="Contraer la cinta" className="ml-auto self-end pb-[5px] pr-[11px]">
        <svg width="12" height="8" viewBox="0 0 12 8" fill="none" stroke="#262626" strokeWidth="1.6"><path d="M0.8 7 L6 1.5 L11.2 7" /></svg>
      </button>
    </div>
  </div>
);

const QuickAccess: React.FC = () => {
  const [autosave, setAutosave] = useState(false);

  return (
    <div className="flex h-[44px] shrink-0 items-center bg-[#bfbbb8] pb-[2px] pl-3 text-[14px] text-[#262626]">
      <label htmlFor="autosave" className="w-[105px]">Autoguardado</label>
      <input
        id="autosave"
        type="checkbox"
        checked={autosave}
        onChange={(e) => setAutosave(e.target.checked)}
        className="flex h-5 w-[47px] appearance-none items-center rounded-full border border-[#333333] px-1 before:size-[10px] before:rounded-full before:bg-[#333333] checked:justify-end"
      />
      <button aria-label="Guardar" className="ml-[18px] mt-1">
        <svg width="20" height="20" viewBox="0 0 20 20" stroke="#8a2b8a" strokeWidth="1.4">
          <path d="M0.8 0.8H19.2V19.2H0.8Z" fill="#c06bc0" />
          <path d="M4.5 0.8H15.5V8.5H4.5Z M6 12.5H14V19.2H6Z" fill="#f5f9f8" />
        </svg>
      </button>
      <button aria-label="Deshacer" className="ml-4 mt-1 text-[#8a8886]">
        <svg width="20" height="20" viewBox="0 0 20 20" fill="none" stroke="currentColor" strokeWidth="1.4">
          <path d="M2 1V8H9 M2 8C6 1.5 12 0 16 3.5C20 8 17 12 9.5 19.5" />
        </svg>
      </button>
      <Chevron className="ml-[6px] text-[#8a8886]" />
      <button aria-label="Rehacer" className="ml-[14px] mt-1 text-[#8a8886]">
        <svg width="20" height="20" viewBox="0 0 20 20" fill="none" stroke="currentColor" strokeWidth="1.4">
          <path d="M18 1V8H11 M18 8C14 1.5 8 0 4 3.5C0 8 3 12 10.5 19.5" />
        </svg>
      </button>
      <Chevron className="ml-[6px] text-[#8a8886]" />
    </div>
  );
};

const FormulaBar: React.FC = () => (
  <div className="flex h-[78px] shrink-0 items-start bg-[#666666] bg-gradient-to-b from-[#444444] to-[#666666] to-[10px] pl-[6px] pr-[6px] pt-3 text-[14px] text-[#444444]">
    <div className="flex h-[30px] w-[127px] items-center border border-[#444444] bg-[#b1b1b1] pr-2">
      <input aria-label="Cuadro de nombres" defaultValue="C16" className="w-0 flex-1 bg-transparent pl-[6px] outline-none" />
      <svg width="8" height="5" viewBox="0 0 8 5" fill="#444"><path d="M0 0H8L4 5Z" /></svg>
    </div>
    <div className="flex h-[30px] w-[37px] flex-col items-center justify-center gap-[3px]">
      <span className="size-[3px] bg-white" />
      <span className="size-[3px] bg-white" />
      <span className="size-[3px] bg-white" />
    </div>
    <div className="flex h-[54px] flex-1 items-start border border-[#444444] bg-[#b1b1b1]">
      <IconButton label="Cancelar" className="w-[43px]">
        <svg width="15" height="13" viewBox="0 0 15 13" fill="none" stroke="#858585" strokeWidth="2.2"><path d="M1 0.5 L14 12.5 M14 0.5 L1 12.5" /></svg>
      </IconButton>
      <IconButton label="Introducir" className="w-[48px]">
        <svg width="17" height="13" viewBox="0 0 17 13" fill="none" stroke="#858585" strokeWidth="2.6"><path d="M1 7 L6 11.5 L16 1" /></svg>
      </IconButton>
      <button aria-label="Insertar función" className="flex h-[29px] w-[40px] items-center justify-center font-['Liberation_Serif',serif] text-[20px] font-bold italic">fx</button>
      <input aria-label="Barra de fórmulas" defaultValue="Anticipo Proveedores Extranjeros" className="h-[29px] flex-1 bg-transparent pl-[48px] outline-none" />
      <button aria-label="Contraer la barra de fórmulas" className="px-[5px] pt-[10px]">
        <svg width="10" height="7" viewBox="0 0 10 7" fill="none" stroke="#333" strokeWidth="2.2"><path d="M1 6 L5 2 L9 6" /></svg>
      </button>
    </div>
  </div>
);

/* ---------- sheet ---------- */

const FilterButton: React.FC<{ label: string; active?: boolean }> = ({ label, active }) => (
  <button aria-label={`Filtrar ${label}`} className="absolute right-px top-px flex size-[21px] items-center justify-center border border-[#9ca3ab] bg-gradient-to-b from-white to-[#e8ecf2]">
    {active ? (
      <svg width="13" height="12" viewBox="0 0 13 12" fill="#555"><path d="M2.5 0H13L9.2 4V10L6.8 9V4Z M0 7H4L2 9.5Z" /></svg>
    ) : (
      <svg width="7" height="5" viewBox="0 0 7 5" fill="#555"><path d="M0 0H7L3.5 4.5Z" /></svg>
    )}
  </button>
);

const RowNumber: React.FC<{ n?: number; hidden?: boolean; filtered?: boolean }> = ({ n, hidden, filtered }) => (
  <th
    scope="row"
    className={`h-6 overflow-hidden bg-[#666666] p-0 text-center font-normal leading-5 ${hidden ? 'border-b-[3px] border-double' : 'border-b'} border-[#c6c6c6] ${filtered ? 'text-[#70f0f0]' : 'text-white'}`}
  >
    {n}
  </th>
);

const Sheet: React.FC = () => (
  <main className="relative flex min-h-0 flex-1 overflow-hidden bg-[#666666] font-['Lato','Liberation_Sans',sans-serif] text-[16px]">
    <div className="min-w-0 flex-1">
      <table className="w-full table-fixed border-separate border-spacing-0">
        <colgroup>
          <col className="w-[34px]" />
          {columns.map((c) => <col key={c.letter} className={c.width} />)}
          <col className="w-1" />
        </colgroup>
        <thead>
          <tr className="h-[22px] text-white">
            <th className="border-b border-r border-[#a6a6a6] p-0">
              <svg width="14" height="14" viewBox="0 0 14 14" className="ml-auto mr-[3px]" fill="#e6e6e6"><path d="M14 0V14H0Z" /></svg>
            </th>
            {columns.map((c) => (
              <th key={c.letter} scope="col" className={`h-[22px] border-b border-r border-[#a6a6a6] p-0 font-normal leading-[21px] ${c.letter === 'C' ? 'bg-[#262626]' : ''}`}>
                {c.letter === 'C' ? '' : c.letter}
              </th>
            ))}
            <th className="p-0" />
          </tr>
        </thead>
        <tbody className="bg-white">
          <tr>
            <RowNumber n={1} hidden />
            {columns.map((c) => (
              <th key={c.letter} scope="col" className={`relative h-6 overflow-hidden whitespace-nowrap p-0 leading-6 ${c.navy ? 'bg-[#002060] text-[17px] font-bold text-white' : 'bg-[#99ccff] font-normal text-black'}`}>
                {c.title}
                <FilterButton label={c.title || c.letter} active={c.letter === 'M'} />
              </th>
            ))}
            <td className="border-b border-[#d4d4d4]" />
          </tr>
          {rows.map((row, i) => {
            const next = rows[i + 1] ? rows[i + 1].n : 241;
            const cell = row.green ? 'border-[#92d050] bg-[#92d050]' : 'border-[#d4d4d4]';
            return (
              <tr key={row.n}>
                <RowNumber n={row.n} hidden={next !== row.n + 1} filtered />
                <td className={`border-b border-r p-0 pr-1 text-right leading-[22px] ${cell}`}>1</td>
                <td className={`border-b border-r p-0 ${cell}`} />
                <td className={`truncate border-b border-r p-0 pl-[3px] leading-[22px] ${cell}`}>{row.name}</td>
                {row.cells.map((value, k) => (
                  <td key={k} className={`border-b border-r p-0 pr-2 text-right leading-[22px] ${cell}`}>{value}</td>
                ))}
                <td className={`relative border-b border-r p-0 text-center leading-[22px] ${cell}`}>
                  <svg width="7" height="8" viewBox="0 0 7 8" className="absolute left-0 top-0" fill="#0b8a1f"><path d="M0 0H7L0 8Z" /></svg>
                  #N/D
                </td>
                <td className="border-b border-[#d4d4d4]" />
              </tr>
            );
          })}
          {[241, 242, 0].map((n) => (
            <tr key={n}>
              <RowNumber n={n || undefined} />
              {columns.map((c) => <td key={c.letter} className="border-b border-r border-[#d4d4d4] p-0" />)}
              <td className="border-b border-[#d4d4d4]" />
            </tr>
          ))}
        </tbody>
      </table>
    </div>
    {/* vertical scrollbar */}
    <div className="flex w-[26px] shrink-0 flex-col bg-[#666666] pl-1 pr-[3px] pt-[2px]">
      <button aria-label="Desplazar hacia arriba" className="flex h-[19px] items-center justify-center border border-[#444444] bg-[#999999]">
        <svg width="10" height="6" viewBox="0 0 10 6" fill="#333"><path d="M0 6H10L5 0Z" /></svg>
      </button>
      <div className="mb-1 flex-1 border border-[#444444] bg-[#999999]" />
      <button aria-label="Desplazar hacia abajo" className="flex h-[19px] items-center justify-center border border-[#444444] bg-[#999999]">
        <svg width="10" height="6" viewBox="0 0 10 6" fill="#333"><path d="M0 0H10L5 6Z" /></svg>
      </button>
    </div>
    {/* rectangle drawn over column B */}
    <div className="absolute left-[79px] top-[9px] h-[595px] w-[89px] border-[5px] border-black bg-white" />
  </main>
);

const SheetTabs: React.FC = () => (
  <div className="flex h-[30px] shrink-0 items-start border-b-2 border-t border-b-[#444444] border-t-[#8c8c8c] bg-[#666666] text-[16px] text-white">
    <div className="flex h-full w-[104px] items-center gap-[23px] pl-[28px]">
      <button aria-label="Hoja anterior"><svg width="6" height="10" viewBox="0 0 6 10" fill="#999"><path d="M5 0V10L0 5Z" /></svg></button>
      <button aria-label="Hoja siguiente"><svg width="6" height="10" viewBox="0 0 6 10" fill="#fff"><path d="M1 0V10L6 5Z" /></svg></button>
    </div>
    <div className="flex min-w-0 items-start border-l border-[#999999]">
      {sheets.map((s) => (
        <button
          key={s.name}
          className={`flex h-[25px] shrink-0 whitespace-nowrap ${s.width} ${s.active ? 'justify-center border-b-2 border-[#217346] bg-white font-bold text-[#217346]' : 'border-r border-[#999999] px-[2px] pt-[2px]'}`}
        >
          <span className={`flex h-[23px] flex-1 justify-center ${s.active ? 'leading-5' : 'leading-4'} ${s.fill ?? ''}`}>{s.name}</span>
        </button>
      ))}
      <button className="w-[62px] whitespace-nowrap text-center leading-5">9a&nbsp; ...</button>
    </div>
    <button aria-label="Hoja nueva" className="mt-1">
      <svg width="20" height="20" viewBox="0 0 20 20" fill="none" stroke="#fff" strokeWidth="1.5"><circle cx="10" cy="10" r="9" /><path d="M10 5V15 M5 10H15" strokeWidth="2" /></svg>
    </button>
    <div className="ml-[17px] flex flex-col gap-[3px] pt-[6px]">
      <span className="size-[3px] bg-white" />
      <span className="size-[3px] bg-white" />
      <span className="size-[3px] bg-white" />
    </div>
    <div className="ml-auto mr-[25px] mt-1 flex h-[19px] w-[89px]">
      <button aria-label="Desplazar a la izquierda" className="flex w-[19px] items-center justify-center border border-[#444444] bg-[#999999]">
        <svg width="6" height="10" viewBox="0 0 6 10" fill="#333"><path d="M6 0V10L0 5Z" /></svg>
      </button>
      <div className="mr-1 flex-1 border border-l-0 border-[#444444] bg-[#999999]" />
      <button aria-label="Desplazar a la derecha" className="flex w-[19px] items-center justify-center border border-[#444444] bg-[#999999]">
        <svg width="6" height="10" viewBox="0 0 6 10" fill="#333"><path d="M0 0V10L6 5Z" /></svg>
      </button>
    </div>
  </div>
);

const StatusBar: React.FC = () => (
  <footer className="flex h-[27px] shrink-0 items-center bg-[#bfbbb8] pl-[9px] text-[12px] text-[#333333]">
    <span>Modo Filtrar</span>
    <div className="ml-auto flex h-full items-center">
      <button aria-label="Vista normal" className="flex h-full w-[50px] items-center justify-center bg-[#979593]">
        <svg width="17" height="16" viewBox="0 0 17 16" fill="none" stroke="#333" strokeWidth="1.3"><path d="M0.7 0.7H16.3V15.3H0.7Z M0.7 5.5H16.3 M0.7 10.3H16.3 M6 0.7V15.3 M11.2 0.7V15.3" /></svg>
      </button>
      <button aria-label="Diseño de página" className="flex h-full w-[50px] items-center justify-center">
        <svg width="18" height="16" viewBox="0 0 18 16" fill="none" stroke="#333" strokeWidth="1.3"><path d="M0.7 0.7H17.3V15.3H0.7Z M4.5 3.2H13.5V12.8H4.5Z M6.5 6H11.5 M6.5 8H11.5 M6.5 10H11.5" /></svg>
      </button>
      <button aria-label="Vista previa de salto de página" className="flex h-full w-[50px] items-center justify-center">
        <svg width="18" height="16" viewBox="0 0 18 16" fill="none" stroke="#333" strokeWidth="1.3"><path d="M0.7 0.7H17.3V15.3H0.7Z M0.7 9.5H11.5V0.7 M6 0.7V9.5" /></svg>
      </button>
      <button aria-label="Alejar" className="ml-[7px] flex h-4 w-[10px] items-center"><span className="h-px w-full bg-[#262626]" /></button>
      <input
        type="range"
        aria-label="Zoom"
        min={10}
        max={190}
        defaultValue={100}
        className="mx-[6px] h-4 w-[125px] appearance-none bg-[linear-gradient(#8a8886,#8a8886)] bg-[length:100%_1px] bg-center bg-no-repeat [&::-webkit-slider-thumb]:h-[14px] [&::-webkit-slider-thumb]:w-[6px] [&::-webkit-slider-thumb]:appearance-none [&::-webkit-slider-thumb]:bg-[#797775]"
      />
      <button aria-label="Acercar">
        <svg width="10" height="10" viewBox="0 0 10 10" stroke="#262626" strokeWidth="1.2"><path d="M0 5H10 M5 0V10" /></svg>
      </button>
      <span className="w-[59px] pr-[11px] text-right">100%</span>
    </div>
  </footer>
);

/* ---------- taskbar ---------- */

const TaskButton: React.FC<Children & { label: string; width?: string; open?: boolean; active?: boolean }> = ({ label, width = 'w-[62px]', open, active, children }) => (
  <button aria-label={label} title={label} className={`flex h-full shrink-0 flex-col items-center ${width} ${active ? 'bg-[#444c55]' : ''}`}>
    <span className="flex flex-1 items-center pt-[2px]">{children}</span>
    <span className={`h-[3px] ${active ? 'w-full bg-[#76b9ed]' : open ? 'w-[51px] bg-[#76b9ed]' : ''}`} />
  </button>
);

const Taskbar: React.FC = () => (
  <div className="flex h-[50px] shrink-0 items-center bg-gradient-to-r from-[#081a28] via-[#0b0c14] to-[#1a232b] text-[14px] text-white">
    <TaskButton label="Inicio" width="w-[60px]">
      <svg width="20" height="22" viewBox="0 0 20 22" fill="#fff"><path d="M0 3.2 L8.6 2 V10.4 H0Z M9.6 1.8 L20 0.4 V10.4 H9.6Z M0 11.4H8.6V19.8L0 18.6Z M9.6 11.4H20V21.6L9.6 20Z" /></svg>
    </TaskButton>
    <TaskButton label="Buscar" width="w-[60px]">
      <svg width="20" height="22" viewBox="0 0 20 22" fill="none" stroke="#fff" strokeWidth="1.4"><circle cx="13" cy="8" r="6.3" /><path d="M8.5 12.5 L0.5 21.5" /></svg>
    </TaskButton>
    <TaskButton label="Vista de tareas" width="w-[62px]">
      <svg width="20" height="20" viewBox="0 0 20 20" fill="none" stroke="#fff" strokeWidth="1.2"><path d="M0.6 0V3H12.6V0 M0.6 6H12.6V14.5H0.6Z M0.6 20V17H12.6V20 M18.5 0V5 M18.5 11V20" /><path d="M17 6.5H20V9.5H17Z" fill="#fff" stroke="none" /></svg>
    </TaskButton>
    <TaskButton label="Calculadora">
      <svg width="22" height="30" viewBox="0 0 22 30" fill="#0b1d28">
        <path d="M0 0H22V30H0Z" fill="#fff" />
        <path d="M2 2H20V7H2Z M2.5 10H6L2.5 14Z M9 10H12.5L9 14Z M16 10H19.5L16 14Z M2.5 17H6L2.5 21Z M9 17H12.5L9 21Z M16 17H19.5L16 21Z M2.5 24H6L2.5 28Z M9 24H12.5L9 28Z M16 24H19.5L16 28Z" />
      </svg>
    </TaskButton>
    <TaskButton label="Recortes">
      <svg width="28" height="30" viewBox="0 0 28 30" fill="none">
        <ellipse cx="12" cy="14" rx="11" ry="7" fill="#8c8f94" transform="rotate(-15 12 14)" />
        <ellipse cx="13" cy="9" rx="12" ry="7.5" fill="#fff" stroke="#d33" strokeWidth="1.4" transform="rotate(-20 13 9)" />
        <path d="M12 3 L16 17 M6 13 L20 5" stroke="#777" strokeWidth="1.3" />
        <ellipse cx="16" cy="23.5" rx="2.6" ry="5" stroke="#1b82c9" strokeWidth="2" transform="rotate(12 16 23)" />
        <ellipse cx="23" cy="19.5" rx="2.6" ry="5" stroke="#1b82c9" strokeWidth="2" transform="rotate(-60 23 19)" />
      </svg>
    </TaskButton>
    <TaskButton label="Defraggler">
      <svg width="28" height="30" viewBox="0 0 28 30">
        <path d="M1 8 L6 5 V22 L17 25 V29 L3 25Z" fill="#c8202a" />
        <path d="M6 5 L12 3 L13 10 L7 12Z" fill="#f4d46a" />
        <path d="M5 14 L13 11 L14 16 L6 18Z" fill="#46c05a" />
        <path d="M6 20 L14 18 L16 23 L8 24Z" fill="#2b5fe0" />
        <path d="M13 7 L18 9 L18 15 L14 14Z" fill="#8ee39b" />
        <path d="M18 1 L23 3 L21 8 L17 5Z" fill="#b86ae0" />
        <path d="M17 16 L22 14 L22 24 L17 28Z" fill="#8a3fc8" />
        <circle cx="25" cy="19" r="2" fill="#1ba4d8" />
      </svg>
    </TaskButton>
    <TaskButton label="Explorador de archivos" open>
      <svg width="28" height="24" viewBox="0 0 28 24">
        <path d="M0 1H12L14 2H28V24H0Z" fill="#ffe493" />
        <path d="M0 0H13V4H0Z" fill="#fbc02d" />
        <path d="M5 13H23V24H18V18H10V24H5Z" fill="#35b3e8" />
      </svg>
    </TaskButton>
    <TaskButton label="Google Chrome" open>
      <svg width="28" height="30" viewBox="-14 -15 28 30">
        <circle r="14" fill="#ffcd40" />
        <path d="M-12.1 -7 A14 14 0 0 1 12.1 -7 L0 -7 A7 7 0 0 0 -6.1 3.5Z" fill="#db4437" />
        <path d="M-12.1 -7 L-6 3.5 A7 7 0 0 0 6.1 3.5 L0 14 A14 14 0 0 1 -12.1 -7Z" fill="#0f9d58" />
        <circle r="6.6" fill="#fff" />
        <circle r="5.3" fill="#4285f4" />
      </svg>
    </TaskButton>
    <TaskButton label="Excel" active>
      <svg width="30" height="30" viewBox="0 0 30 30">
        <path d="M8 0H19V8H8Z" fill="#21a366" />
        <path d="M19 0H30V8H19Z" fill="#33c481" />
        <path d="M8 8H19V15H8Z" fill="#107c41" />
        <path d="M19 8H30V15H19Z" fill="#21a366" />
        <path d="M8 15H30V30H8Z" fill="#185c37" />
        <path d="M19 15H30V22H19Z" fill="#107c41" />
        <path d="M0 7H16V23H0Z" fill="#107c41" />
        <text x="8" y="19" textAnchor="middle" fontSize="12" fontWeight="bold" fill="#fff">X</text>
      </svg>
    </TaskButton>

    <div className="ml-auto flex h-full items-center">
      <svg width="20" height="22" viewBox="0 0 20 22" className="mr-[26px]" fill="none" stroke="#fff" strokeWidth="1.4">
        <circle cx="13.5" cy="4" r="3.3" /><path d="M9.5 10.5 C10 7.5 17.5 7 18.7 12.5" />
        <circle cx="6.5" cy="11.5" r="3.3" /><path d="M1 20.5 C1.5 14.5 10.5 14.5 11.5 20.5" />
      </svg>
      <svg width="16" height="9" viewBox="0 0 16 9" className="mr-3" fill="none" stroke="#fff" strokeWidth="1.4"><path d="M0.7 8.3 L8 1 L15.3 8.3" /></svg>
      <svg width="18" height="17" viewBox="0 0 18 17" className="mr-3" fill="#fff">
        <path d="M4.5 0 L9 2.9 L4.5 5.8 L0 2.9Z M13.5 0 L18 2.9 L13.5 5.8 L9 2.9Z M4.5 5.8 L9 8.7 L4.5 11.6 L0 8.7Z M13.5 5.8 L18 8.7 L13.5 11.6 L9 8.7Z M4.5 12.7 L9 9.8 L13.5 12.7 L9 15.6Z" />
      </svg>
      <svg width="20" height="14" viewBox="0 0 20 14" className="mr-3" fill="none" stroke="#fff" strokeWidth="1.3">
        <path d="M5 3.5H18V12.5H3.5V8" /><path d="M6.5 5H16.5V11H5.5V8.5L6.5 7Z" fill="#fff" stroke="none" />
        <path d="M18.5 6V10 M0.7 2.5H5.3V5.5C5.3 8 0.7 8 0.7 5.5Z M1.8 0V2.5 M4.2 0V2.5" />
      </svg>
      <svg width="17" height="16" viewBox="0 0 17 16" className="mr-3" fill="none" stroke="#fff" strokeWidth="1.3">
        <path d="M1 15 C1 7 7 1 15 1" opacity="0.6" /><path d="M4.5 15 C4.5 9 9 4.8 15 4.8 M8.2 15 C8.2 11 11 8.5 15 8.5" />
        <path d="M11.5 15 C11.5 13 13 12 15 12V15Z" fill="#fff" stroke="none" />
      </svg>
      <svg width="20" height="16" viewBox="0 0 20 16" className="mr-4" fill="none" stroke="#fff" strokeWidth="1.3">
        <path d="M0.7 5.3H3.5L7.5 1.5V14.5L3.5 10.7H0.7Z M10 5.5C11.3 7 11.3 9 10 10.5 M12.8 3.5C15 6 15 10 12.8 12.5" /><path d="M15.8 1C19.5 5 19.5 11 15.8 15" opacity="0.5" />
      </svg>
      <span>ESP</span>
      <div className="ml-5 mr-4 flex flex-col items-center leading-6">
        <span>19:13</span>
        <span>23-04-2020</span>
      </div>
      <button aria-label="Notificaciones" className="relative ml-[5px] mr-3 h-full w-9">
        <svg width="20" height="22" viewBox="0 0 20 22" className="ml-1"><path d="M0 0H20V17H10L6 21V17H0Z" fill="#fff" /><path d="M3 5H17 M3 9H17 M3 13H13" stroke="#1a232b" strokeWidth="1.3" /></svg>
        <span className="absolute bottom-1 right-[3px] flex size-5 items-center justify-center rounded-full border border-[#8c9094] bg-[#2b3238] text-[12px] font-bold">3</span>
      </button>
      <span className="mr-1 h-full w-px bg-[#5b636a]" />
    </div>
  </div>
);

const App: React.FC = () => (
  <div className="flex h-screen w-full flex-col overflow-hidden font-['Open_Sans','Noto_Sans',sans-serif]">
    <TitleBar />
    <Ribbon />
    <QuickAccess />
    <FormulaBar />
    <Sheet />
    <SheetTabs />
    <StatusBar />
    <Taskbar />
  </div>
);

export default App;
